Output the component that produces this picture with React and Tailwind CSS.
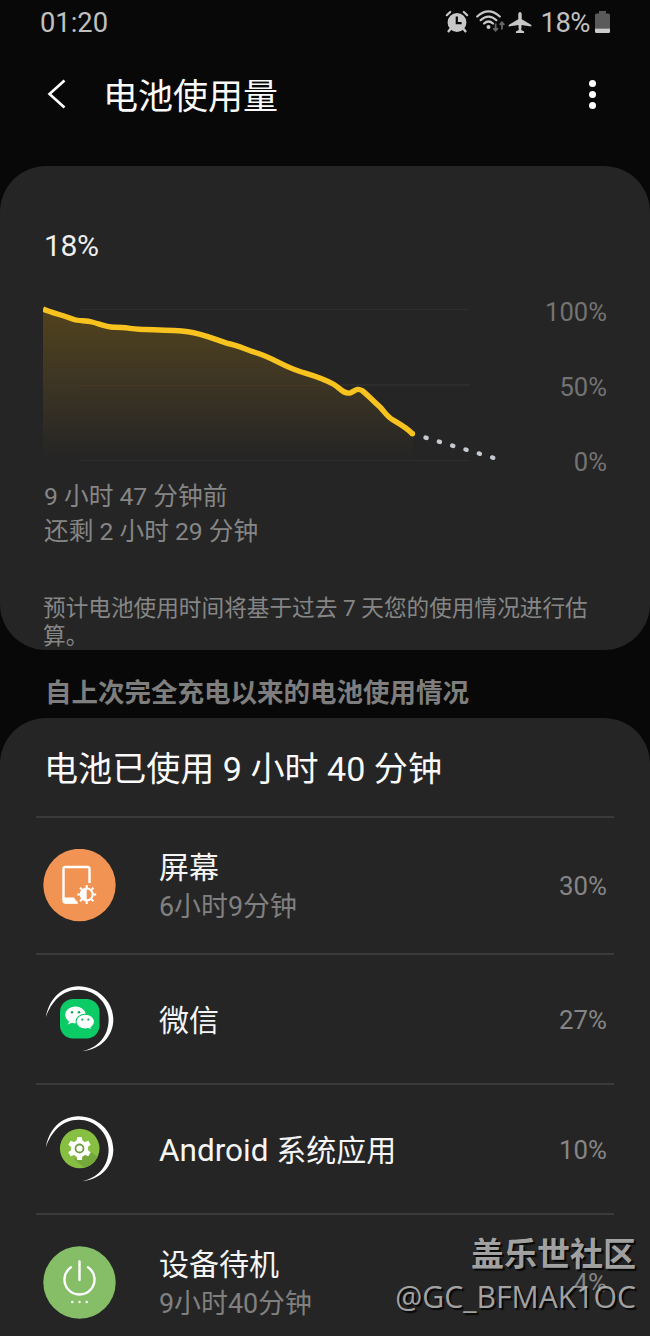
import React from "react";

function AlarmIcon() {
  return (
    <svg className="h-6 w-6" viewBox="0 0 24 24" fill="none">
      <circle cx="12" cy="12.500" r="9.400" fill="#c8c8c8" />
      <path d="M1.800 5.200 5.200 2M22.200 5.200 18.800 2" stroke="#c8c8c8" strokeWidth="2.200" strokeLinecap="round" />
      <path d="M5.400 19 3.600 21.300M18.600 19l1.800 2.300" stroke="#c8c8c8" strokeWidth="2.400" strokeLinecap="round" />
      <path d="M11.800 6.500V13.200H16.600" stroke="#080808" strokeWidth="2.200" />
    </svg>
  );
}

function WifiIcon() {
  return (
    <svg className="h-6 w-[30px]" viewBox="0 0 30 24" fill="none">
      <g stroke="#c8c8c8" strokeWidth="2.200" strokeLinecap="round">
        <path d="M1.200 6.500Q12.500 -3.600 23.800 6.500" />
        <path d="M4.600 10.200Q12.500 3 20.400 10.200" />
        <path d="M8 13.500Q12.500 9.500 17 13.500" />
      </g>
      <circle cx="12.500" cy="17" r="2" fill="#c8c8c8" />
      <path d="M19.600 13.500v7M17.300 18.200l2.300 2.400 2.300-2.400M26 19.500v-7M23.700 14.800l2.300-2.400 2.300 2.400" stroke="#666" strokeWidth="1.800" />
    </svg>
  );
}

function PlaneIcon() {
  return (
    <svg className="h-6 w-6" viewBox="0 0 24 24" fill="#c8c8c8">
      <path d="M12 .9c-1.100 0-1.700 1.100-1.700 2.300v5L1 13.700c-.5.4-.6 1.400-.2 1.900l9.600-1.700.4 5-2.900 1.700v1.400h8.200v-1.400l-2.900-1.700.4-5 9.600 1.700c.4-.5.3-1.500-.2-1.900l-9.300-5.500v-5c0-1.200-.6-2.300-1.700-2.300z" />
    </svg>
  );
}

function BatteryIcon() {
  return (
    <svg className="h-[22px] w-[15px]" viewBox="0 0 15 22">
      <path d="M4 0h7v2.500h2.500q1.500 0 1.500 1.500V17.500H0V4q0-1.500 1.500-1.500H4z" fill="#5a5a5a" />
      <path d="M0 17.500h15V20.500q0 1.500-1.500 1.500h-12Q0 22 0 20.500z" fill="#cbcbcb" />
    </svg>
  );
}

const usageLine =
  "M43 309C51 312.500 64 315.500 74 319.500C79 321 86 320.500 92 322C100 324 105 327 114 327.300C125 327 134 329.500 146 329.500C160 330 174 330.200 188 331.700C202 333.500 214 339 228 343.500C237 345 246 349.500 257 353C273 358 283 366 300 371.500C313 375.500 323 378 334 384.500C340 388 343 394 350 393C355 391 357 387.500 362 390.500C368 395 374 402 380 407C385 412 387 417 394 420.500C400 424 407 428 412.500 433.800";

function UsageChart() {
  return (
    <svg className="h-[164px] w-[465px] shrink-0" viewBox="43 300 465 164" fill="none">
      <defs>
        <linearGradient id="usage" x1="0" y1="309" x2="0" y2="457" gradientUnits="userSpaceOnUse">
          <stop offset="0" stopColor="#52431d" />
          <stop offset="0.5" stopColor="#3d3524" />
          <stop offset="1" stopColor="#252525" />
        </linearGradient>
      </defs>
      <path d={usageLine + "V457H43Z"} fill="url(#usage)" />
      <path d="M79 309.500H469M79 460.500H469" stroke="#2e2e2e" />
      <path d="M335 385H469" stroke="#30302e" strokeWidth="1.500" />
      <path d="M79 385.500H335" stroke="#483726" strokeWidth="1.500" />
      <path d={usageLine} stroke="#f9c31f" strokeWidth="5.400" strokeLinejoin="round" />
      <circle cx="412.500" cy="433.800" r="2.700" fill="#f9c31f" />
      <path d="M425.500 437.600L494 458" stroke="#c5cad0" strokeWidth="4.400" strokeLinecap="round" strokeDasharray="1.200 12.700" />
    </svg>
  );
}

function ScreenIcon() {
  return (
    <svg className="size-[73px]" viewBox="0 0 73 73" fill="none">
      <circle cx="36.500" cy="36" r="36.200" fill="#f09353" />
      <path d="M46.500 34V20q0-2-2-2H22.500q-2 0-2 2V51.500q0 2 2 2h12" stroke="#fff" strokeWidth="2.400" />
      <path d="M20.500 48.500H31l4 6H22.500q-2 0-2-2z" fill="#fff" />
      <g stroke="#fff" strokeWidth="2">
        <circle cx="43.700" cy="45.500" r="6" />
        <path d="M43.700 36v3M43.700 52v3M34.200 45.500h3M50.200 45.500h3M37 38.800l2.200 2.200M48.200 50l2.200 2.200M50.400 38.800l-2.200 2.200M39.200 50L37 52.200" />
      </g>
      <path d="M43.700 39.500a6 6 0 0 0 0 12z" fill="#fff" />
    </svg>
  );
}

function Ring() {
  return (
    <path d="M2.800 34.500C5.500 17 18 3.200 35.500 3.200C54 3.200 70.300 18 70.300 36.500C70.300 52.500 58.500 66.500 39 68.300C56 64.500 65.600 52.500 65.600 36.500C65.600 20 52 6.800 35.500 6.800C19 6.800 8 19 2.800 34.500Z" fill="#fff" />
  );
}

function WeChatIcon() {
  return (
    <svg className="size-[73px]" viewBox="0 0 73 73">
      <Ring />
      <rect x="17" y="16" width="39.500" height="39.500" rx="13" fill="#0acb66" />
      <path d="M32.500 23.500c-5.800 0-10.200 3.700-10.200 8.400 0 2.700 1.400 5 3.700 6.600l-.9 3.100 3.700-1.800c1.200.4 2.400.5 3.700.5 5.600 0 10.200-3.700 10.200-8.400s-4.600-8.400-10.200-8.400z" fill="#fff" />
      <path d="M42.300 31.200c-5.100 0-9.200 3.300-9.200 7.400s4.100 7.400 9.200 7.400c1.200 0 2.300-.2 3.300-.500l3.200 1.600-.8-2.700c2.100-1.300 3.500-3.400 3.500-5.800 0-4.100-4.100-7.400-9.200-7.400z" fill="#fff" stroke="#0acb66" strokeWidth="1.100" />
      <g fill="#18a95c">
        <circle cx="29" cy="29.300" r="1.300" />
        <circle cx="36" cy="29.300" r="1.300" />
        <circle cx="39.300" cy="36.600" r="1.100" />
        <circle cx="45.300" cy="36.600" r="1.100" />
      </g>
    </svg>
  );
}

function AndroidIcon() {
  return (
    <svg className="size-[73px]" viewBox="0 0 73 73">
      <Ring />
      <circle cx="36.700" cy="35.500" r="19.800" fill="#86bf41" />
      <path d="M46.500 38L54.500 44A20 20 0 0 1 41 54.800L31 46z" fill="#75a83b" />
      <g transform="translate(36.500 35.500)" fill="#fff">
        <circle r="8.600" />
        <path d="M-3 -7.500L-2.300 -11.600H2.300L3 -7.500z" />
        <path transform="rotate(60)" d="M-3 -7.500L-2.300 -11.600H2.300L3 -7.500z" />
        <path transform="rotate(120)" d="M-3 -7.500L-2.300 -11.600H2.300L3 -7.500z" />
        <path transform="rotate(180)" d="M-3 -7.500L-2.300 -11.600H2.300L3 -7.500z" />
        <path transform="rotate(240)" d="M-3 -7.500L-2.300 -11.600H2.300L3 -7.500z" />
        <path transform="rotate(300)" d="M-3 -7.500L-2.300 -11.600H2.300L3 -7.500z" />
        <circle r="4" fill="none" stroke="#6f9f45" strokeWidth="1.800" />
      </g>
    </svg>
  );
}

function StandbyIcon() {
  return (
    <svg className="size-[73px]" viewBox="0 0 73 73" fill="none">
      <circle cx="36.500" cy="36.500" r="36.200" fill="#85be67" />
      <path d="M28 21.200A15 15 0 1 0 45 21.200M36.500 15.500V34" stroke="#fff" strokeWidth="2.400" strokeLinecap="round" />
      <g fill="#fff">
        <circle cx="29.300" cy="56" r="1.200" />
        <circle cx="36.500" cy="56" r="1.200" />
        <circle cx="43.700" cy="56" r="1.200" />
      </g>
    </svg>
  );
}

function UsageRow({ icon, name, time, percent, className }) {
  return (
    <div className={"flex items-center border-t-2 border-[#3a3a3a] pr-[7px] pl-[7px] " + className}>
      {icon}
      <div className="ml-[43px] flex-1 pt-[3px]">
        <div className="text-[30px] leading-[40px] text-[#f5f5f5]">{name}</div>
        {time && <div className="text-[26.900px] leading-[38px] text-[#808080]">{time}</div>}
      </div>
      <div className="pt-[2px] text-[25.800px] text-[#858585]">{percent}</div>
    </div>
  );
}

export default function App() {
  return (
    <div className="relative flex h-[1336px] w-[650px] flex-col overflow-hidden bg-[#080808] font-['Roboto','Noto_Sans_CJK_SC',sans-serif] whitespace-nowrap">
      <div className="flex h-[46px] shrink-0 items-center pr-10 pl-[40px] text-[#c0c0c0]">
        <span className="flex-1 text-[27.300px]">01:20</span>
        <span className="-mt-[3px]"><AlarmIcon /></span>
        <span className="-mt-[2px] ml-[7px]"><WifiIcon /></span>
        <span className="-mt-[1px] ml-[2px]"><PlaneIcon /></span>
        <span className="ml-2 text-[27.500px] tracking-[-0.5px]">18%</span>
        <span className="-mt-[2px] ml-[5px]"><BatteryIcon /></span>
      </div>
      <header className="flex h-[120px] shrink-0 items-start pr-[54px] pl-[47px]">
        <svg className="mt-[33px] h-[30px] w-5" viewBox="0 0 20 30" fill="none">
          <path d="M17.500 1.500 2.500 15 17.500 28.500" stroke="#fff" strokeWidth="2.600" />
        </svg>
        <h1 className="ml-[36px] flex-1 pt-[27px] text-[35px] leading-[50px] text-[#fafafa]">电池使用量</h1>
        <div className="mt-[34px] flex flex-col gap-[4px]">
          <i className="size-[7px] rounded-full bg-white" />
          <i className="size-[7px] rounded-full bg-white" />
          <i className="size-[7px] rounded-full bg-white" />
        </div>
      </header>

      <section className="flex h-[484px] shrink-0 flex-col rounded-[46px] bg-[#252525] px-[43px] pt-[60px] text-[#868686]">
        <div className="h-10 pl-[1px] text-[30px] leading-10 tracking-[-0.3px] text-[#eee]">18%</div>
        <div className="mt-[34px] flex h-[164px]">
          <UsageChart />
          <div className="flex flex-1 flex-col gap-[45px] text-right text-[25.600px] leading-[30px] text-[#737373]">
            <span className="-mt-[3px]">100%</span>
            <span>50%</span>
            <span>0%</span>
          </div>
        </div>
        <p className="mt-[15px] pl-[1px] text-[24.700px] leading-[35px]">
          9 小时 47 分钟前<br />还剩 2 小时 29 分钟
        </p>
        <p className="mt-[46px] text-[22.650px] leading-[28px]">
          预计电池使用时间将基于过去 7 天您的使用情况进行估<br />算。
        </p>
      </section>

      <h2 className="flex h-[68px] shrink-0 items-center pt-[18px] pl-[45px] text-[26.500px] font-bold text-[#7e7e7e]">
        自上次完全充电以来的电池使用情况
      </h2>

      <section className="h-[700px] shrink-0 rounded-t-[46px] bg-[#252525] px-9">
        <h3 className="flex h-[98px] items-center pt-[6px] pl-[8px] text-[34.100px] text-[#fafafa]">电池已使用 9 小时 40 分钟</h3>
        <UsageRow className="h-[137px]" icon={<ScreenIcon />} name="屏幕" time="6小时9分钟" percent="30%" />
        <UsageRow className="h-[130px]" icon={<WeChatIcon />} name="微信" percent="27%" />
        <UsageRow
          className="h-[130px]"
          icon={<AndroidIcon />}
          name={<><span className="text-[31.500px]">Android </span>系统应用</>}
          percent="10%"
        />
        <UsageRow className="h-[137px]" icon={<StandbyIcon />} name="设备待机" time="9小时40分钟" percent="4%" />
      </section>

      <div className="absolute right-[14px] bottom-[18px] flex flex-col items-end text-[#b5b5b5]/90 [text-shadow:2px_2px_1px_#080808]">
        <div className="text-[33px] leading-[43px] font-bold">盖乐世社区</div>
        <div className="font-['Open_Sans',sans-serif] text-[30.200px] leading-[42px]">@GC_BFMAK1OC</div>
      </div>
    </div>
  );
}
